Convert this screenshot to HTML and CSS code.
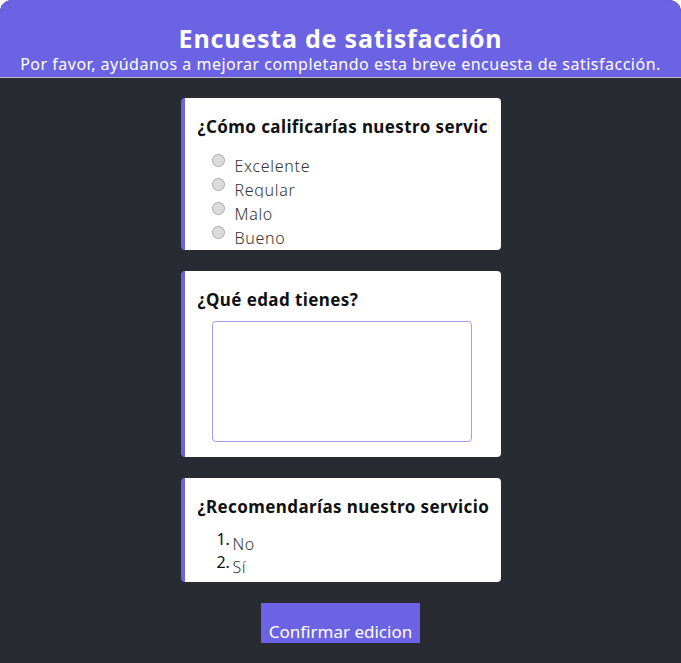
FILE: index.html
```html
<!DOCTYPE html>
<html lang="es">
<head>
  <meta charset="UTF-8" />
  <meta name="viewport" content="width=device-width, initial-scale=1.0" />
  <title>Encuesta de satisfacción</title>
  <link rel="stylesheet" href="styles.css">
</head>
<body>

  <div class="app">
    <header class="survey-header">
      <h1>Encuesta de satisfacción</h1>
      <p>Por favor, ayúdanos a mejorar completando esta breve encuesta de satisfacción.</p>
    </header>

    <main class="survey">
      <section class="question">
        <h3>¿Cómo calificarías nuestro servicio?</h3>
        <div class="options">
          <div class="option"><input type="radio" name="servicio" id="op1"><label for="op1">Excelente</label></div>
          <div class="option"><input type="radio" name="servicio" id="op2"><label for="op2">Regular</label></div>
          <div class="option"><input type="radio" name="servicio" id="op3"><label for="op3">Malo</label></div>
          <div class="option"><input type="radio" name="servicio" id="op4"><label for="op4">Bueno</label></div>
        </div>
      </section>

      <section class="question">
        <h3>¿Qué edad tienes?</h3>
        <textarea class="answer"></textarea>
      </section>

      <section class="question">
        <h3>¿Recomendarías nuestro servicio a otras personas?</h3>
        <ol class="choices">
          <li><span>No</span></li>
          <li><span>Sí</span></li>
        </ol>
      </section>

      <button class="confirm">Confirmar edicion</button>
    </main>
  </div>

</body>
</html>
```

FILE: styles.css
```css
* {
  box-sizing: border-box;
}

body {
  margin: 0;
  padding: 0;
  background: #fff;
  font-family: "Noto Sans", sans-serif;
}

.app {
  background: #292b32;
  border-radius: 12px 12px 0 0;
  overflow: hidden;
  min-height: 663px;
}

.survey-header {
  background: #6c63e4;
  color: #fff;
  text-align: center;
  height: 78px;
  padding-top: 22px;
  border-bottom: 1px solid #b9b9c4;
}

.survey-header h1 {
  margin: 0;
  font-size: 25px;
  line-height: 32px;
  font-weight: 700;
  letter-spacing: 0.8px;
}

.survey-header p {
  margin: 0;
  font-size: 16px;
  line-height: 21px;
  letter-spacing: 0.5px;
}

.survey {
  display: flex;
  flex-direction: column;
  align-items: center;
  padding-top: 20px;
  gap: 21px;
}

.question {
  width: 320px;
  background: #fff;
  border-left: 4px solid #6c63e4;
  border-radius: 4px;
  padding: 18px 12px 4px 13px;
}

.question h3 {
  margin: 0 0 10px;
  font-size: 17px;
  line-height: 22px;
  font-weight: 700;
  letter-spacing: 0.4px;
  color: #111;
  white-space: nowrap;
  overflow: hidden;
}

.options {
  padding: 2px 0 0 9px;
}

.option {
  height: 24px;
  overflow: hidden;
  font-size: 16px;
  letter-spacing: 0.7px;
  color: #333;
}

.option input {
  appearance: none;
  width: 13px;
  height: 13px;
  margin: 3px 3px 0 5px;
  border: 1px solid #a9a9a9;
  border-radius: 50%;
  background: #dcdcdc;
}

.option label {
  display: inline-block;
  vertical-align: -5px;
  margin-left: 7px;
  font-weight: 300;
}

.answer {
  display: block;
  width: 260px;
  height: 121px;
  margin: 0 0 11px 14px;
  border: 1px solid #a29bfe;
  border-radius: 4px;
  resize: none;
}

.choices {
  margin: 4px 0 4px;
  padding-left: 35px;
  font-size: 16px;
  letter-spacing: 0.6px;
  color: #333;
}

.choices li {
  height: 23px;
}

.choices li::marker {
  content: counter(list-item) ".\2009";
  color: #111;
  font-size: 16px;
  letter-spacing: 0;
}

.choices span {
  display: inline-block;
  vertical-align: -5px;
  font-weight: 300;
}

.confirm {
  background: #6c63e4;
  color: #fff;
  border: none;
  font-family: inherit;
  font-size: 17px;
  width: 159px;
  height: 40px;
  padding: 16px 0 0;
  cursor: pointer;
}
```
